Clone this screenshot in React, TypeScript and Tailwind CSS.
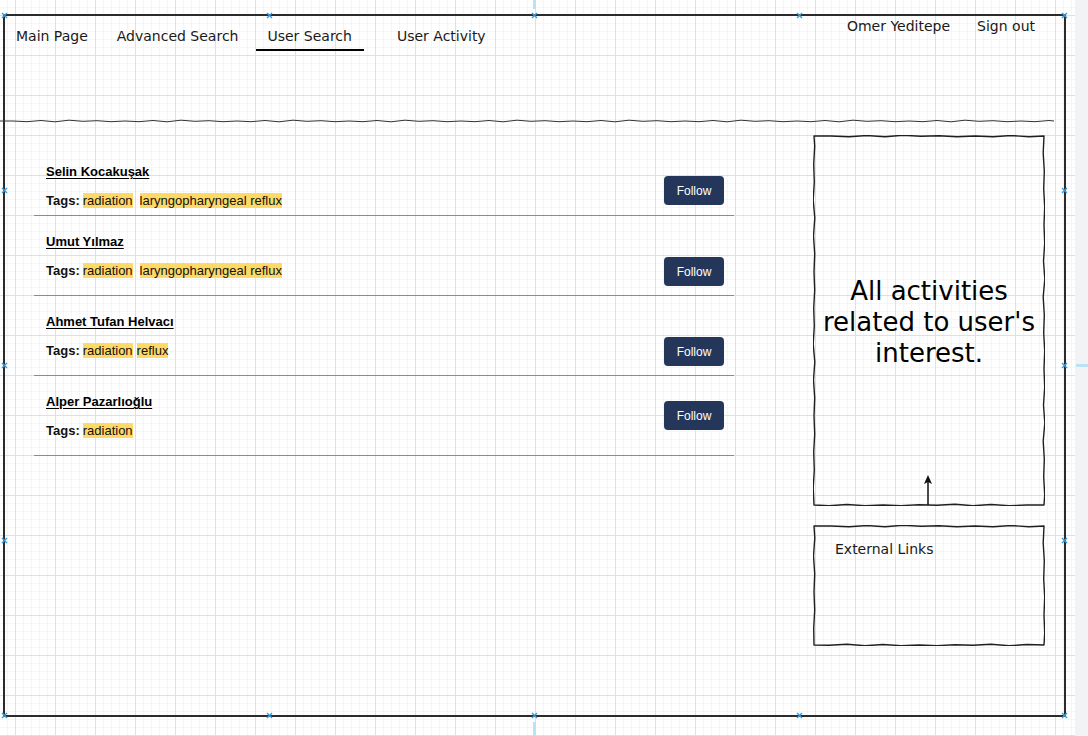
import type { ReactNode } from "react";

const users = [
  {
    name: "Selin Kocakuşak",
    tags: ["radiation", "laryngopharyngeal reflux"],
    tagGap: "ml-[7px]",
    row: "h-[70px]",
    btn: "mt-[30px]",
  },
  {
    name: "Umut Yılmaz",
    tags: ["radiation", "laryngopharyngeal reflux"],
    tagGap: "ml-[7px]",
    row: "h-[80px]",
    btn: "mt-[41px]",
  },
  {
    name: "Ahmet Tufan Helvacı",
    tags: ["radiation", "reflux"],
    tagGap: "ml-[4px]",
    row: "h-[80px]",
    btn: "mt-[41px]",
  },
  {
    name: "Alper Pazarlıoğlu",
    tags: ["radiation"],
    tagGap: "ml-[4px]",
    row: "h-[80px]",
    btn: "mt-[25px]",
  },
];

// selection handles drawn by the editor around the frame
const handles = [
  [4, 15], [269, 15], [534, 15], [799, 15], [1064, 15],
  [4, 715], [269, 715], [534, 715], [799, 715], [1064, 715],
  [4, 190], [4, 365], [4, 540],
  [1064, 190], [1064, 365], [1064, 540],
];

const jit = (i: number) => [0, 0.7, -0.5, 0.8, -0.8, 0.3, -0.3, 0.7][i % 8];

const wavy = (() => {
  let d = "M0 2";
  let i = 0;
  for (let x = 14; x < 1055; x += 14) d += ` L${x} ${2 + jit(i++)}`;
  return d + " L1055 2";
})();

// hand-drawn looking rectangle outline
const roughRect = (w: number, h: number) => {
  let i = 0;
  const p = 1;
  let d = `M${p} ${p}`;
  for (let x = 18; x < w - p; x += 18) d += ` L${x} ${p + jit(i++)}`;
  d += ` L${w - p} ${p}`;
  for (let y = 18; y < h - p; y += 18) d += ` L${w - p + jit(i++)} ${y}`;
  d += ` L${w - p} ${h - p}`;
  for (let x = w - 18; x > p; x -= 18) d += ` L${x} ${h - p + jit(i++)}`;
  d += ` L${p} ${h - p}`;
  for (let y = h - 18; y > p; y -= 18) d += ` L${p + jit(i++)} ${y}`;
  return d + " Z";
};

const SketchBox = ({ w, h, className, children }: { w: number; h: number; className: string; children?: ReactNode }) => (
  <div className={`relative ${className}`}>
    <svg className="pointer-events-none absolute inset-0" width={w} height={h} viewBox={`0 0 ${w} ${h}`}>
      <path d={roughRect(w, h)} fill="none" stroke="#1f1f1f" strokeWidth="1.4" strokeLinejoin="round" />
    </svg>
    {children}
  </div>
);

const UserRow = ({ u }: { u: (typeof users)[number] }) => (
  <div className={`flex items-start justify-between border-b border-[#8c8c8c] pl-3 pr-[10px] ${u.row}`}>
    <div className="pt-[18px]">
      <div className="text-[13px] leading-[15px] font-bold text-black underline underline-offset-2">
        {u.name}
      </div>
      <div className="mt-[14px] flex text-[13px] leading-[15px] text-[#111]">
        <span className="font-bold">Tags:</span>
        <span className="ml-[3px] bg-[#ffd966]">{u.tags[0]}</span>
        {u.tags.slice(1).map((t) => (
          <span key={t} className={`bg-[#ffd966] ${u.tagGap}`}>
            {t}
          </span>
        ))}
      </div>
    </div>
    <button
      className={`flex h-[29px] w-[60px] items-center justify-center rounded-[4px] bg-[#24375a] text-[12px] text-white ${u.btn}`}
    >
      Follow
    </button>
  </div>
);

export default function App() {
  return (
    <div className="relative flex h-[736px] w-[1088px] overflow-hidden font-['DejaVu_Sans',sans-serif] text-[#1a1a1a]">
      <div className="h-full w-[1075px] bg-white bg-[linear-gradient(to_right,#e0e0e0_1px,transparent_1px),linear-gradient(to_bottom,#e0e0e0_1px,transparent_1px),linear-gradient(to_right,#f5f5f5_1px,transparent_1px),linear-gradient(to_bottom,#f5f5f5_1px,transparent_1px)] bg-[length:40px_40px,40px_40px,8px_8px,8px_8px] bg-[position:15px_15px]">
        <div className="ml-[3px] mt-[14px] flex h-[703px] w-[1063px] flex-col border-2 border-[#2b2b2b]">
          {/* header */}
          <div className="flex h-[103px] justify-between">
            <nav className="flex items-start pt-[12px] text-[14px] leading-[17px]">
              <span className="ml-[11px]">Main Page</span>
              <span className="ml-[29px]">Advanced Search</span>
              <span className="ml-[18px] border-b-2 border-black pl-[11px] pr-3 pb-[4px]">User Search</span>
              <span className="ml-[33px]">User Activity</span>
            </nav>
            <div className="flex items-start gap-[27px] pr-[29px] pt-[2px] text-[14px] leading-[17px]">
              <span>Omer Yeditepe</span>
              <span>Sign out</span>
            </div>
          </div>

          <svg className="-ml-[6px] block h-[4px] w-[1055px] shrink-0" viewBox="0 0 1055 4">
            <path d={wavy} fill="none" stroke="#333" strokeWidth="1" />
          </svg>

          {/* body */}
          <div className="flex flex-1">
            <div className="ml-[29px] mt-[23px] flex w-[700px] flex-col font-['Liberation_Sans',Arial,sans-serif]">
              {users.map((u) => (
                <UserRow key={u.name} u={u} />
              ))}
            </div>

            <div className="ml-[79px] mt-[12px] flex w-[232px] flex-col gap-[19px]">
              <SketchBox
                w={232}
                h={371}
                className="flex h-[371px] items-center justify-center px-2 pt-[4px] text-center text-[26px] leading-[31px] text-black"
              >
                All activities related to user's interest.
                <svg className="absolute bottom-0 left-[109px] h-[31px] w-[12px]" viewBox="0 0 12 31">
                  <line x1="6" y1="30" x2="6" y2="7" stroke="#111" strokeWidth="1.5" />
                  <path d="M6 0 L10 9 L6 7 L2 9 Z" fill="#111" />
                </svg>
              </SketchBox>
              <SketchBox w={232} h={121} className="h-[121px] pl-[22px] pt-[16px] text-[14px] leading-[17px]">
                External Links
              </SketchBox>
            </div>
          </div>
        </div>
      </div>
      <div className="h-full w-[13px] bg-[#f1f3f5]" />

      {/* editor overlay: handles and hover arrows */}
      {handles.map(([x, y]) => (
        <svg
          key={`${x}-${y}`}
          className="absolute h-[7px] w-[7px]"
          style={{ left: x - 3, top: y - 3 }}
          viewBox="0 0 7 7"
        >
          <path d="M1 1 L6 6 M6 1 L1 6" stroke="#3a9bd8" strokeWidth="1.4" />
        </svg>
      ))}
      <div className="absolute left-[533px] top-0 h-[9px] w-[3px] bg-[#b9e2f5]" />
      <div className="absolute left-[533px] top-[722px] h-[14px] w-[3px] bg-[#b9e2f5]" />
      <div className="absolute left-[1076px] top-[364px] h-[3px] w-[12px] bg-[#b9e2f5]" />
    </div>
  );
}
